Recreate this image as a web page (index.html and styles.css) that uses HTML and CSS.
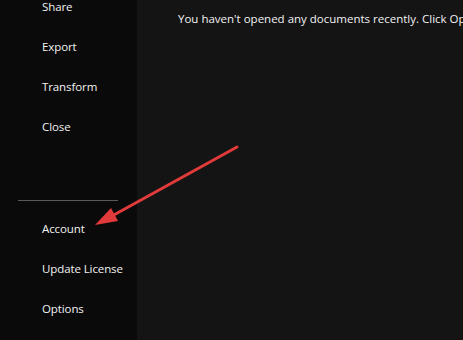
FILE: index.html
```html
<!DOCTYPE html>
<html lang="en">
<head>
    <meta charset="UTF-8">
    <link rel="stylesheet" href="styles.css">
</head>
<body>
    <div class="backstage">
        <nav class="sidebar">
            <div class="nav-item">Share</div>
            <div class="nav-item">Export</div>
            <div class="nav-item">Transform</div>
            <div class="nav-item">Close</div>
            <div class="divider"></div>
            <div class="nav-item">Account</div>
            <div class="nav-item">Update License</div>
            <div class="nav-item">Options</div>
        </nav>
        <main class="content">
            <p class="empty">You haven't opened any documents recently. Click Open to browse for a document.</p>
        </main>
    </div>

    <svg class="arrow" width="463" height="340" viewBox="0 0 463 340">
        <line x1="237" y1="147" x2="112" y2="216" stroke="#e13a3a" stroke-width="3" stroke-linecap="round"/>
        <polygon points="95,225 118,221 111,208" fill="#e13a3a"/>
    </svg>
</body>
</html>
```

FILE: styles.css
```css
* {
    margin: 0;
    padding: 0;
    box-sizing: border-box;
}

body {
    width: 463px;
    height: 340px;
    overflow: hidden;
    background: #141414;
    font-family: "Open Sans", "Noto Sans", sans-serif;
    font-size: 11.5px;
    color: #f2f2f2;
    position: relative;
}

.backstage {
    display: flex;
    height: 100%;
}

.sidebar {
    width: 137px;
    flex-shrink: 0;
    background: #0a0a0a;
    display: flex;
    flex-direction: column;
    margin-top: -13px;
    height: 353px;
}

.nav-item {
    height: 40px;
    line-height: 40px;
    padding-left: 42px;
    white-space: nowrap;
    letter-spacing: -0.1px;
}

.divider {
    height: 1px;
    width: 100px;
    background: #5a5a5a;
    margin: 53px 0 8px 18px;
}

.content {
    flex: 1;
    padding: 11px 0 0 41px;
    white-space: nowrap;
    overflow: hidden;
}

.empty {
    line-height: 16px;
}

.arrow {
    position: absolute;
    left: 0;
    top: 0;
    pointer-events: none;
}
```
